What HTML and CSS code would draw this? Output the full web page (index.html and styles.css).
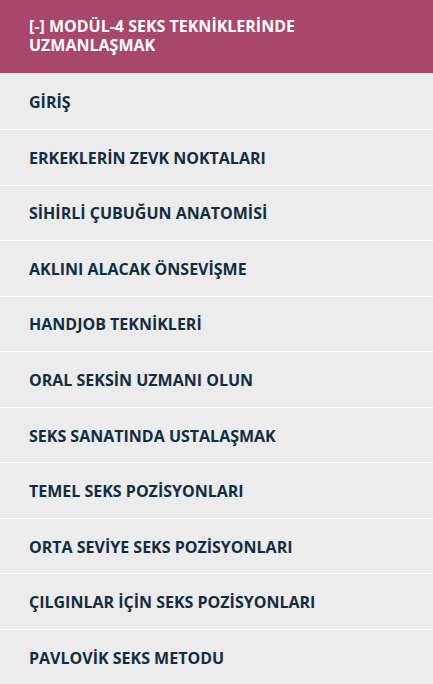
FILE: index.html
```html
<!DOCTYPE html>
<html lang="tr">
<head>
<meta charset="utf-8">
<link rel="stylesheet" href="styles.css">
</head>
<body>
<div class="module">
  <div class="module-head">[-] MODÜL-4 SEKS TEKNİKLERİNDE UZMANLAŞMAK</div>
  <ul class="lessons">
    <li class="lesson">GİRİŞ</li>
    <li class="lesson">ERKEKLERİN ZEVK NOKTALARI</li>
    <li class="lesson">SİHİRLİ ÇUBUĞUN ANATOMİSİ</li>
    <li class="lesson">AKLINI ALACAK ÖNSEVİŞME</li>
    <li class="lesson">HANDJOB TEKNİKLERİ</li>
    <li class="lesson">ORAL SEKSİN UZMANI OLUN</li>
    <li class="lesson">SEKS SANATINDA USTALAŞMAK</li>
    <li class="lesson">TEMEL SEKS POZİSYONLARI</li>
    <li class="lesson">ORTA SEVİYE SEKS POZİSYONLARI</li>
    <li class="lesson">ÇILGINLAR İÇİN SEKS POZİSYONLARI</li>
    <li class="lesson">PAVLOVİK SEKS METODU</li>
  </ul>
</div>
</body>
</html>
```
FILE: styles.css
```css
html, body {
  margin: 0;
  padding: 0;
  background: #ececec;
}
body {
  font-family: "Open Sans", "Noto Sans", sans-serif;
}
.module {
  width: 433px;
}
.module-head {
  background: #a8466b;
  color: #ffffff;
  font-weight: 700;
  font-size: 16px;
  line-height: 19px;
  padding: 16.7px 60px 18.3px 29px;
  height: 38px;
}
.lessons {
  list-style: none;
  margin: 0;
  padding: 1.45px 0 0;
}
.lesson {
  background: #ececec;
  color: #112d42;
  font-weight: 700;
  font-size: 16px;
  line-height: 20px;
  height: 20px;
  padding: 17.8px 29px 16.75px;
  border-bottom: 1px solid #ffffff;
}
```
